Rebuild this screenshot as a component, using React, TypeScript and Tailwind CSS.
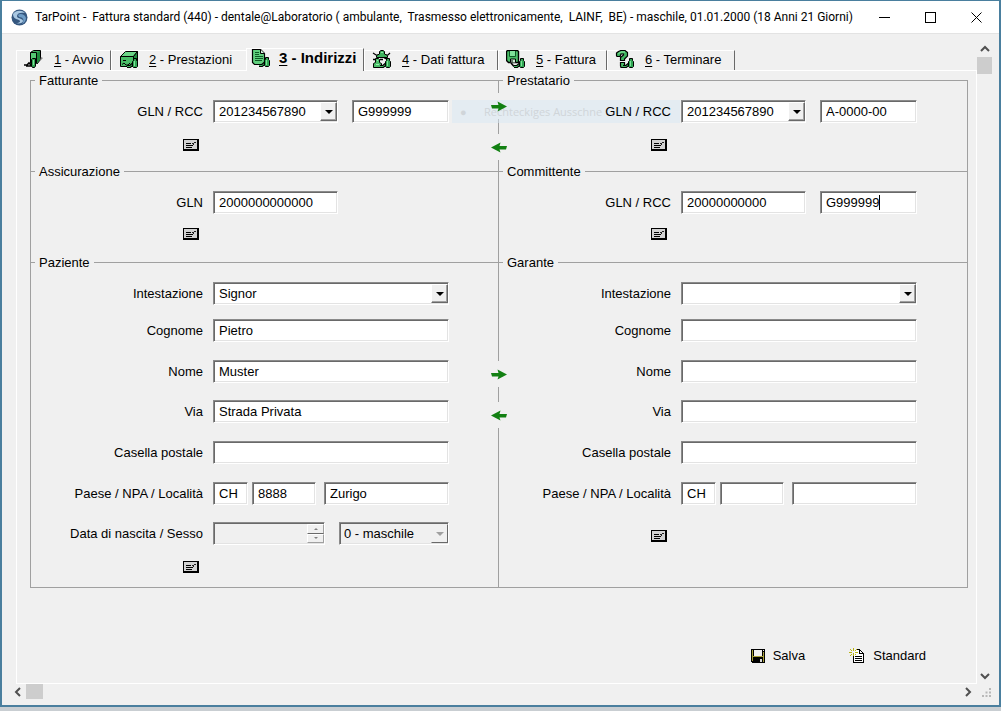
import type { ReactNode } from 'react';
import clsx from 'clsx';

const sunken =
  'border border-t-[#8a8a8a] border-l-[#8a8a8a] border-r-white border-b-white shadow-[inset_1px_1px_0_#696969,inset_-1px_-1px_0_#e3e3e3] outline-none';

/* ---------- icons ---------- */

function LogoIcon() {
  return (
    <svg width="17" height="17" viewBox="0 0 17 17" aria-hidden="true">
      <circle cx="8.5" cy="8.5" r="8" fill="#35577f" />
      <path d="M2 5C5 1 11 1 14 4C10 3 6 4 6 7C6 10 12 9 12 12C12 14 8 15 5 14C9 14 10 12 8 11C5 10 2 9 2 5Z" fill="#a9c8e2" />
      <path d="M7 6C9 4 14 5 15 9C15 12 13 14 11 15C14 11 12 8 8 8Z" fill="#6d9cc6" />
    </svg>
  );
}

// small green connector with its cord, shared by most of the tab icons
function Plug() {
  return (
    <>
      <path d="M8 16.5H11L14 14" fill="none" stroke="#000" strokeWidth="3" />
      <path d="M8 16.5H11L14 14" fill="none" stroke="#3fb35f" strokeWidth="1" />
      <path d="M14.5 8.5H17.5V10.5L18.5 11.5V16.5L17.5 17.5H14.5L13.5 16.5V11.5L14.5 10.5Z" fill="#2fa552" stroke="#000" />
      <path d="M15.5 11V16" stroke="#7fe09a" />
    </>
  );
}

function TabSvg({ children }: { children: ReactNode }) {
  return (
    <svg width="20" height="19" viewBox="0 0 20 19" className="shrink-0" aria-hidden="true">
      {children}
    </svg>
  );
}

function StartIcon() {
  return (
    <TabSvg>
      <path d="M6.5 2.5L9.5 .5H16.5V9.5L13 14" fill="#3fae5c" stroke="#000" />
      <path d="M6.5 2.5H12.5V13.5H6.5Z" fill="#55c873" stroke="#000" />
      <path d="M13 3L16 1V10L13 13Z" fill="#1f8a3d" />
      <path d="M17 7L19 8L16 11Z" fill="#888" />
      <path d="M0 15H3L5 13L7 15V16H2" fill="none" stroke="#000" strokeWidth="1.6" />
      <path d="M8.5 8.5H11.5V16L10.5 17.5H8.5L7.5 16V9.5Z" fill="#2fa552" stroke="#000" />
      <path d="M9.5 10V15" stroke="#7fe09a" />
    </TabSvg>
  );
}

function ServicesIcon() {
  return (
    <TabSvg>
      <path d="M1.5 6.5L6.5 1.5H18.5L14.5 6.5Z" fill="#6bd487" stroke="#000" />
      <path d="M14.5 6.5L18.5 1.5V12L14.5 16.5Z" fill="#1f8a3d" stroke="#000" />
      <path d="M1.5 6.5H14.5V16.5H1.5Z" fill="#49bd67" stroke="#000" />
      <path d="M4 10.5H7" stroke="#000" />
      <path d="M3 14.5L5 13L7 15H9L11 13" fill="none" stroke="#000" />
      <Plug />
    </TabSvg>
  );
}

function AddressIcon() {
  return (
    <TabSvg>
      <path d="M1.5 .5H9.5L13.5 4.5V15.5H3.5L1.5 13.5Z" fill="#5fcf7d" stroke="#000" strokeWidth="1.2" />
      <path d="M9.5 .5V4.5H13.5" fill="#d9f5e0" stroke="#000" />
      <path d="M4 3.5H8M4 5.5H8M4 7.5H12M4 9.5H12M4 11.5H11" stroke="#0d5a24" />
      <Plug />
    </TabSvg>
  );
}

function DataIcon() {
  return (
    <TabSvg>
      <path d="M1 3L4 5H16L18 3" fill="none" stroke="#000" strokeWidth="1.2" />
      <path d="M7.5 1.5L9 .5H11L12.5 1.5V4L15.5 5.5V7.5H4.5V5.5L7.5 4Z" fill="#3fb35f" stroke="#000" />
      <path d="M9 2.5H11" stroke="#8be5a2" />
      <path d="M1 9.5H3M8 9.5H11M12 7.5L15 9" stroke="#000" strokeWidth="1.4" />
      <path d="M3.5 8.5H6.5L7.5 9.5V12.5L9.5 13.5V17.5H1.5V13.5L3.5 12.5Z" fill="#49bd67" stroke="#000" />
      <path d="M4 14.5H7M5 10.5H6" stroke="#9bebb0" />
      <Plug />
    </TabSvg>
  );
}

function InvoiceIcon() {
  return (
    <TabSvg>
      <path d="M.5 1.5L1.5 .5H11.5L12.5 1.5V12.5H2.5L.5 10.5Z" fill="#49bd67" stroke="#000" strokeWidth="1.4" />
      <path d="M3.5 1V6.5H9.5V1" fill="#7fe09a" stroke="#0d5a24" />
      <path d="M4.5 12.5V9H9.5V12.5" fill="#cfeed7" stroke="#000" />
      <path d="M6 10V12.5" stroke="#000" />
      <path d="M5 13L8 16.5" fill="none" stroke="#000" strokeWidth="1.6" />
      <Plug />
    </TabSvg>
  );
}

function QuitIcon() {
  return (
    <TabSvg>
      <path
        d="M1.5 5.5V3L3.5 1.5L6 .5H10L12.5 2.5V6L9.5 9V10.5H5.5V7.5L8.5 5V4H6L5 6.5H2Z"
        fill="#3fb35f"
        stroke="#000"
        strokeWidth="1.2"
      />
      <path d="M3.5 3.5L6 2H10" fill="none" stroke="#8be5a2" />
      <path d="M5.5 12.5H9.5V16L8 17.5H6L5.5 16Z" fill="#49bd67" stroke="#000" strokeWidth="1.2" />
      <Plug />
    </TabSvg>
  );
}

function ArrowIcon({ left = false }: { left?: boolean }) {
  return (
    <svg width="16" height="11" viewBox="0 0 16 11" className="relative z-10" aria-hidden="true">
      {left ? (
        <path d="M16 4H8.5L9.5 .5L0 5.5L9.5 10.5L8.5 7.5H15Z" fill="#128012" />
      ) : (
        <path d="M0 4H7.5L6.5 .5L16 5.5L6.5 10.5L7.5 7.5H1Z" fill="#128012" />
      )}
    </svg>
  );
}

function CardIcon() {
  return (
    <svg width="16" height="12" viewBox="0 0 16 12" shapeRendering="crispEdges" aria-hidden="true">
      <rect width="16" height="12" fill="#000" />
      <rect x="1" y="1" width="13" height="9" fill="#d2d2d2" />
      <path d="M3 4.5H8M3 6.5H10M3 8.5H9" stroke="#000" />
      <path d="M9 4.5H11M11 3.5H13M10 5.5H11" stroke="#222" />
    </svg>
  );
}

function SaveIcon() {
  return (
    <svg width="14" height="14" viewBox="0 0 14 14" shapeRendering="crispEdges" aria-hidden="true">
      <path d="M0 0H14V14H1L0 13Z" fill="#000" />
      <path d="M1 1H2V12H1ZM12 3H13V13H12ZM2 7H12V8H2Z" fill="#a8a03a" />
      <rect x="3" y="1" width="8" height="6" fill="#f0f0f0" />
      <rect x="12" y="1" width="1" height="1" fill="#f0f0f0" />
      <rect x="9" y="10" width="2" height="3" fill="#d8d8d8" />
    </svg>
  );
}

function NewIcon() {
  return (
    <svg width="16" height="16" viewBox="0 0 16 16" shapeRendering="crispEdges" aria-hidden="true">
      <path d="M4.5 5V14.5H14.5V5.5L10.5 1.5H8" fill="#fff" stroke="#000" />
      <path d="M10.5 1.5V5.5H14.5" fill="none" stroke="#000" />
      <path d="M6 8.5H13M6 10.5H13M6 12.5H13" stroke="#000" />
      <path d="M4.5 0V3M4.5 5V8M0 4.5H3M6 4.5H9M1 1L3 3M8 1L6 3M1 8L3 6M6 6L7 7" stroke="#b9b414" fill="none" />
    </svg>
  );
}

function Chevron({ d }: { d: string }) {
  return (
    <svg width="10" height="10" viewBox="0 0 10 10" aria-hidden="true">
      <path d={d} fill="none" stroke="#505050" strokeWidth="2" />
    </svg>
  );
}

/* ---------- form controls ---------- */

interface TextProps {
  id?: string;
  label?: string;
  value?: string;
  className?: string;
}

function TextBox({ id, label, value = '', className }: TextProps) {
  return (
    <input
      id={id}
      aria-label={label}
      type="text"
      defaultValue={value}
      className={clsx('h-[23px] min-w-0 bg-white pl-[5px]', sunken, className)}
    />
  );
}

interface ComboProps extends TextProps {
  disabled?: boolean;
}

function Combo({ id, label, value = '', className, disabled }: ComboProps) {
  return (
    <div className={clsx('relative h-[23px]', className)}>
      <select
        id={id}
        aria-label={label}
        defaultValue={value}
        disabled={disabled}
        className={clsx(
          'block h-full w-full appearance-none text-black disabled:opacity-100',
          disabled ? 'bg-[#f0f0f0] pl-1' : 'bg-white pl-[5px]',
          sunken,
        )}
      >
        <option>{value}</option>
      </select>
      <span
        className={clsx(
          'pointer-events-none absolute top-[2px] right-px bottom-[2px] flex w-[17px] items-center justify-center border border-r-[#696969] border-b-[#696969] bg-[#f0f0f0]',
          disabled ? 'border-t-[#f0f0f0] border-l-[#f0f0f0]' : 'border-t-white border-l-white shadow-[inset_-1px_-1px_0_#a0a0a0]',
        )}
      >
        <svg width="8" height="4" viewBox="0 0 8 4" aria-hidden="true">
          <path d="M0 0H8L4 4Z" fill={disabled ? '#a0a0a0' : '#000'} />
        </svg>
      </span>
    </div>
  );
}

function Row({ label, htmlFor, className, children }: { label: string; htmlFor: string; className?: string; children: ReactNode }) {
  return (
    <div className={clsx('flex items-center gap-2.5', className)}>
      <label htmlFor={htmlFor} className="w-[172px] text-right whitespace-nowrap">
        {label}
      </label>
      <div className="flex w-[236px]">{children}</div>
    </div>
  );
}

function CardButton({ label, className }: { label: string; className: string }) {
  return (
    <div className={clsx('flex w-[172px] justify-end pr-1', className)}>
      <button type="button" aria-label={label}>
        <CardIcon />
      </button>
    </div>
  );
}

function Group({ title, children }: { title: string; children: ReactNode }) {
  return (
    <fieldset className="relative min-w-0 border-t border-l border-[#a0a0a0] pt-[19px]">
      <legend className="absolute -top-2.5 left-1 bg-[#f0f0f0] px-1 leading-5">{title}</legend>
      {children}
    </fieldset>
  );
}

// copy arrows sitting on the line between the two columns
function CopyArrows({ className }: { className: string }) {
  return (
    <div className={clsx('absolute -left-[13px] flex w-[26px] flex-col gap-[15px]', className)}>
      <button type="button" aria-label="Copia a destra" className="flex h-[26px] items-center justify-center bg-[#f0f0f0]">
        <ArrowIcon />
      </button>
      <button type="button" aria-label="Copia a sinistra" className="flex h-[26px] items-center justify-center bg-[#f0f0f0]">
        <ArrowIcon left />
      </button>
    </div>
  );
}

interface Person {
  prefix: string;
  intestazione?: string;
  cognome?: string;
  nome?: string;
  via?: string;
  paese?: string;
  npa?: string;
  localita?: string;
}

function PersonFields({ prefix, intestazione, cognome, nome, via, paese, npa, localita }: Person) {
  return (
    <>
      <Row label="Intestazione" htmlFor={`${prefix}-title`}>
        <Combo id={`${prefix}-title`} value={intestazione} className="w-full" />
      </Row>
      <Row label="Cognome" htmlFor={`${prefix}-surname`} className="mt-3.5">
        <TextBox id={`${prefix}-surname`} value={cognome} className="w-full" />
      </Row>
      <Row label="Nome" htmlFor={`${prefix}-name`} className="mt-[18px]">
        <TextBox id={`${prefix}-name`} value={nome} className="w-full" />
      </Row>
      <Row label="Via" htmlFor={`${prefix}-street`} className="mt-[17px]">
        <TextBox id={`${prefix}-street`} value={via} className="w-full" />
      </Row>
      <Row label="Casella postale" htmlFor={`${prefix}-pobox`} className="mt-[18px]">
        <TextBox id={`${prefix}-pobox`} className="w-full" />
      </Row>
      <Row label="Paese / NPA / Località" htmlFor={`${prefix}-country`} className="mt-[18px]">
        <TextBox id={`${prefix}-country`} value={paese} className="w-[35px]" />
        <TextBox label="NPA" value={npa} className="ml-1 w-16" />
        <TextBox label="Località" value={localita} className="ml-2 flex-1" />
      </Row>
    </>
  );
}

/* ---------- tabs ---------- */

const tabs = [
  { key: '1', title: 'Avvio', icon: <StartIcon />, width: 'w-[95px]', line: true },
  { key: '2', title: 'Prestazioni', icon: <ServicesIcon />, width: 'w-[135px]', line: false },
  { key: '3', title: 'Indirizzi', icon: <AddressIcon />, width: 'w-[118px]', line: true },
  { key: '4', title: 'Dati fattura', icon: <DataIcon />, width: 'w-[134px]', line: true },
  { key: '5', title: 'Fattura', icon: <InvoiceIcon />, width: 'w-[109px]', line: true },
  { key: '6', title: 'Terminare', icon: <QuitIcon />, width: 'w-[128px]', line: true },
];

function Tabs({ active }: { active: string }) {
  return (
    <div role="tablist" className="flex items-end">
      {tabs.map((tab) => {
        const selected = tab.key === active;
        return (
          <button
            key={tab.key}
            type="button"
            role="tab"
            aria-selected={selected}
            className={clsx(
              'flex items-center border-t border-l border-white whitespace-nowrap',
              tab.width,
              tab.line && 'border-r border-r-[#696969]',
              selected
                ? 'relative -mb-px h-[23px] gap-2 bg-[#f0f0f0] pb-1 pl-1 text-[15px] font-bold'
                : 'h-5 gap-2.5 pb-0.5 pl-[7px]',
            )}
          >
            {tab.icon}
            <span>
              <span className="underline underline-offset-2">{tab.key}</span> - {tab.title}
            </span>
          </button>
        );
      })}
    </div>
  );
}

export default function App() {
  return (
    <div className="flex min-h-screen flex-col bg-[#c9ced2] pb-1 font-['Liberation_Sans',Arial,sans-serif] text-[13px] leading-4 text-black">
      <div className="flex flex-1 flex-col border-t border-r-2 border-b-2 border-l-2 border-[#4a7f9e] bg-[#f0f0f0]">
        {/* Title bar */}
        <header className="flex h-8 items-center bg-white pl-[9px]">
          <LogoIcon />
          <h1 className="ml-[7px] flex-1 font-['Roboto','Noto_Sans',sans-serif] text-[12px] whitespace-pre">
            {'TarPoint -  Fattura standard (440) - dentale@Laboratorio ( ambulante,  Trasmesso elettronicamente,  LAINF,  BE) - maschile, 01.01.2000 (18 Anni 21 Giorni)'}
          </h1>
          <button type="button" aria-label="Riduci a icona" className="flex h-full w-[46px] items-center justify-center">
            <svg width="11" height="11" viewBox="0 0 11 11">
              <path d="M0 5.5H11" stroke="#000" />
            </svg>
          </button>
          <button type="button" aria-label="Ingrandisci" className="flex h-full w-[46px] items-center justify-center">
            <svg width="11" height="11" viewBox="0 0 11 11">
              <rect x=".5" y=".5" width="10" height="10" fill="none" stroke="#000" />
            </svg>
          </button>
          <button type="button" aria-label="Chiudi" className="flex h-full w-[46px] items-center justify-center">
            <svg width="11" height="11" viewBox="0 0 11 11">
              <path d="M.5 .5L10.5 10.5M10.5 .5L.5 10.5" stroke="#000" />
            </svg>
          </button>
        </header>

        <div className="flex flex-1 border-t border-[#e3e3e3] pr-[7px] pl-3.5">
          <main className="flex flex-1 flex-col pt-3.5">
            <Tabs active="3" />

            <div className="flex-1 border border-white pt-[9px] pr-2 pl-[13px]">
              <form onSubmit={(e) => e.preventDefault()}>
                <div className="grid grid-cols-[468fr_469fr] border-r border-b border-[#a0a0a0]">
                  <Group title="Fatturante">
                    <Row label="GLN / RCC" htmlFor="biller-gln">
                      <Combo id="biller-gln" value="201234567890" className="w-[125px]" />
                      <TextBox label="RCC fatturante" value="G999999" className="ml-3.5 flex-1" />
                    </Row>
                    <CardButton label="Indirizzo fatturante" className="mt-4 pb-5" />
                  </Group>

                  <Group title="Prestatario">
                    <CopyArrows className="top-3" />
                    {/* fading snip menu entry */}
                    <div className="pointer-events-none absolute top-[19px] -left-[47px] flex h-[23px] w-[228px] items-center bg-[#d8e8f3]/50 pl-2 font-['Open_Sans','Noto_Sans',sans-serif] text-[11px] whitespace-nowrap text-[#d0d5d9]">
                      <span className="w-6">●</span>
                      Rechteckiges Ausschne
                    </div>
                    <Row label="GLN / RCC" htmlFor="provider-gln" className="relative">
                      <Combo id="provider-gln" value="201234567890" className="w-[125px]" />
                      <TextBox label="RCC prestatario" value="A-0000-00" className="ml-3.5 flex-1" />
                    </Row>
                    <CardButton label="Indirizzo prestatario" className="mt-4 pb-5" />
                  </Group>

                  <Group title="Assicurazione">
                    <Row label="GLN" htmlFor="insurer-gln">
                      <TextBox id="insurer-gln" value="2000000000000" className="w-[125px]" />
                    </Row>
                    <CardButton label="Indirizzo assicurazione" className="mt-3.5 pb-[22px]" />
                  </Group>

                  <Group title="Committente">
                    <Row label="GLN / RCC" htmlFor="client-gln">
                      <TextBox id="client-gln" value="20000000000" className="w-[125px]" />
                      <div className="relative ml-3.5 flex flex-1">
                        <TextBox label="RCC committente" value="G999999" className="w-full" />
                        <span className="absolute top-1 left-[59px] h-[15px] w-px bg-black" />
                      </div>
                    </Row>
                    <CardButton label="Indirizzo committente" className="mt-3.5 pb-[22px]" />
                  </Group>

                  <Group title="Paziente">
                    <PersonFields
                      prefix="patient"
                      intestazione="Signor"
                      cognome="Pietro"
                      nome="Muster"
                      via="Strada Privata"
                      paese="CH"
                      npa="8888"
                      localita="Zurigo"
                    />
                    <Row label="Data di nascita / Sesso" htmlFor="patient-birth" className="mt-[17px]">
                      <div className="relative w-28">
                        <input
                          id="patient-birth"
                          type="text"
                          disabled
                          className={clsx('block h-[23px] w-full bg-[#f0f0f0] pl-[5px]', sunken)}
                        />
                        <div className="absolute top-[2px] right-px bottom-[2px] flex w-[17px] flex-col">
                          <button type="button" disabled aria-label="Aumenta" className="flex flex-1 items-center justify-center border border-t-white border-l-white border-r-[#a0a0a0] border-b-[#696969]">
                            <svg width="4" height="2" viewBox="0 0 4 2"><path d="M0 2H4L2 0Z" fill="#808080" /></svg>
                          </button>
                          <button type="button" disabled aria-label="Diminuisci" className="flex flex-1 items-center justify-center border border-t-white border-l-white border-r-[#a0a0a0] border-b-[#a0a0a0]">
                            <svg width="4" height="2" viewBox="0 0 4 2"><path d="M0 0H4L2 2Z" fill="#808080" /></svg>
                          </button>
                        </div>
                      </div>
                      <Combo label="Sesso" value="0 - maschile" disabled className="ml-3.5 flex-1" />
                    </Row>
                    <CardButton label="Indirizzo paziente" className="mt-4 pb-3.5" />
                  </Group>

                  <Group title="Garante">
                    <CopyArrows className="top-[98px]" />
                    <PersonFields prefix="guarantor" paese="CH" />
                    <CardButton label="Indirizzo garante" className="mt-[25px]" />
                  </Group>
                </div>

                <div className="mt-14 flex justify-end gap-11 pr-[42px]">
                  <button type="submit" className="flex h-6 items-center gap-2">
                    <SaveIcon />
                    Salva
                  </button>
                  <button type="button" className="flex h-6 items-center gap-2">
                    <NewIcon />
                    Standard
                  </button>
                </div>
              </form>
            </div>
          </main>

          {/* Vertical scrollbar */}
          <div className="flex w-[15px] flex-col pt-[7px]">
            <button type="button" aria-label="Scorri in alto" className="flex h-4 items-center justify-center">
              <Chevron d="M1 7L5 3L9 7" />
            </button>
            <div className="h-[17px] bg-[#cdcdcd]" />
            <div className="flex-1" />
            <button type="button" aria-label="Scorri in basso" className="flex h-4 items-center justify-center">
              <Chevron d="M1 3L5 7L9 3" />
            </button>
          </div>
        </div>

        {/* Horizontal scrollbar */}
        <div className="flex h-[21px] items-start pr-[7px] pl-2">
          <button type="button" aria-label="Scorri a sinistra" className="flex h-4 w-4 items-center justify-center">
            <Chevron d="M7 1L3 5L7 9" />
          </button>
          <div className="h-[15px] w-[17px] bg-[#cdcdcd]" />
          <div className="flex-1" />
          <button type="button" aria-label="Scorri a destra" className="flex h-4 w-4 items-center justify-center">
            <Chevron d="M3 1L7 5L3 9" />
          </button>
          <svg width="10" height="10" viewBox="0 0 10 10" className="mt-1 ml-1.5" aria-hidden="true">
            <path d="M7 0H9V2H7ZM7 3.5H9V5.5H7ZM3.5 3.5H5.5V5.5H3.5ZM7 7H9V9H7ZM3.5 7H5.5V9H3.5ZM0 7H2V9H0Z" fill="#b8b8b8" />
          </svg>
        </div>
      </div>
    </div>
  );
}
